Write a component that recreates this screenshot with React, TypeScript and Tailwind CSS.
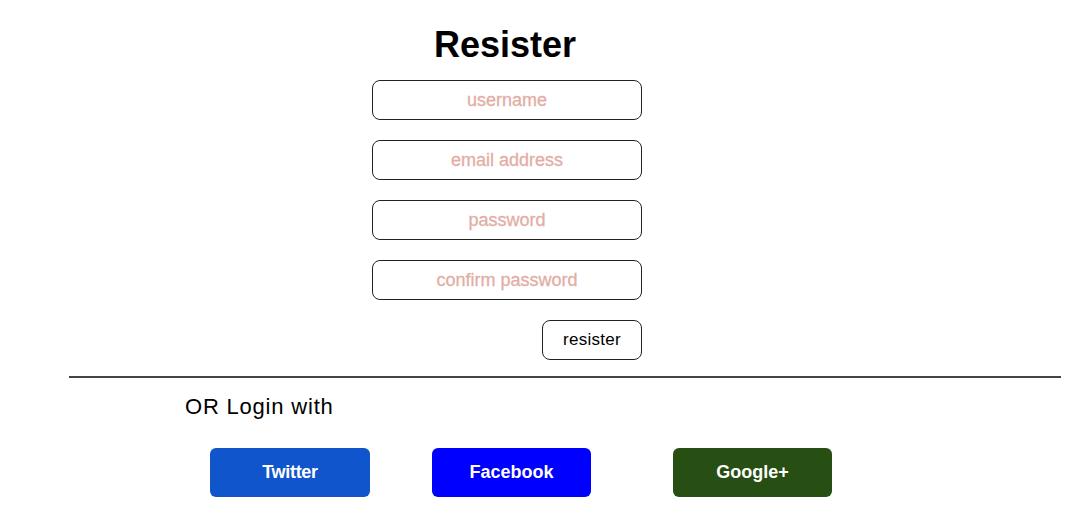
import React from "react";

export default function App() {
  const fields = ["username", "email address", "password", "confirm password"];
  return (
    <div className="w-[1085px] h-[517px] bg-white font-['Liberation_Sans',Arial,sans-serif] text-black overflow-hidden">
      <div className="ml-[372px] w-[270px] flex flex-col">
        <h1 className="mt-[24px] h-[42px] leading-[42px] text-[36px] font-bold text-center -ml-[4px]">Resister</h1>
        <div className="mt-[14px] flex flex-col gap-[20px]">
          {fields.map((f) => (
            <div
              key={f}
              className="h-[40px] rounded-[8px] border border-[#222] flex items-center justify-center text-[18px] text-[#e3ada4] [-webkit-text-stroke:0.3px_#e3ada4]"
            >
              {f}
            </div>
          ))}
        </div>
        <div className="mt-[20px] flex justify-end">
          <div className="w-[100px] h-[40px] rounded-[8px] border border-[#222] flex items-center justify-center text-[17px] tracking-[0.3px]">
            resister
          </div>
        </div>
      </div>
      <div className="ml-[69px] mt-[16px] w-[992px] h-[2px] bg-[#444]" />
      <div className="ml-[185px] mt-[17px] text-[22px] leading-[24px] tracking-[0.8px]">OR Login with</div>
      <div className="ml-[210px] mt-[29px] flex">
        <div className="w-[160px] h-[49px] rounded-[6px] bg-[#1155cc] text-white font-bold text-[18px] tracking-[-0.3px] flex items-center justify-center">Twitter</div>
        <div className="ml-[62px] w-[159px] h-[49px] rounded-[6px] bg-[#0000ff] text-white font-bold text-[18px] flex items-center justify-center">Facebook</div>
        <div className="ml-[82px] w-[159px] h-[49px] rounded-[6px] bg-[#274e13] text-white font-bold text-[18px] flex items-center justify-center">Google+</div>
      </div>
    </div>
  );
}
